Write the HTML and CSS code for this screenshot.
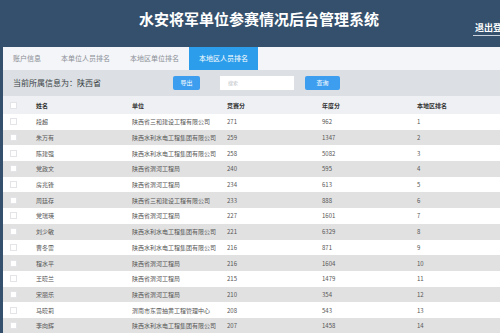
FILE: index.html
```html
<!DOCTYPE html>
<html lang="zh-CN">
<head>
  <meta charset="UTF-8">
  <meta name="viewport" content="width=device-width, initial-scale=1.0">
  <title>水安将军单位参赛情况后台管理系统</title>
  <link rel="stylesheet" href="styles.css">
</head>
<body>

<div class="Page">
  <div class="Header">
    <span></span>
    <h1>水安将军单位参赛情况后台管理系统</h1>
    <a class="Logout" href="#">退出登录</a>
  </div>

  <div class="Panel">
    <div class="Tabs">
      <span class="Tab">账户信息</span>
      <span class="Tab">本单位人员排名</span>
      <span class="Tab">本地区单位排名</span>
      <span class="Tab active">本地区人员排名</span>
    </div>

    <div class="InfoBar">
      <span class="InfoText">当前所属信息为：陕西省</span>
      <button class="Btn export">导出</button>
      <input class="Search" type="text" placeholder="搜索">
      <button class="Btn query">查询</button>
    </div>

    <div class="RankTable">
      <div class="Row head">
        <span class="Check"></span>
        <span>姓名</span>
        <span>单位</span>
        <span>竞赛分</span>
        <span>年度分</span>
        <span>本地区排名</span>
      </div>
      <div class="Row"><span class="Check"></span><span>段超</span><span>陕西省三和建设工程有限公司</span><span>271</span><span>962</span><span>1</span></div>
      <div class="Row"><span class="Check"></span><span>朱万有</span><span>陕西水利水电工程集团有限公司</span><span>259</span><span>1347</span><span>2</span></div>
      <div class="Row"><span class="Check"></span><span>陈建强</span><span>陕西水利水电工程集团有限公司</span><span>258</span><span>5082</span><span>3</span></div>
      <div class="Row"><span class="Check"></span><span>党政文</span><span>陕西省渭河工程局</span><span>240</span><span>595</span><span>4</span></div>
      <div class="Row"><span class="Check"></span><span>房兆锋</span><span>陕西省渭河工程局</span><span>234</span><span>613</span><span>5</span></div>
      <div class="Row"><span class="Check"></span><span>周廷存</span><span>陕西省三和建设工程有限公司</span><span>233</span><span>888</span><span>6</span></div>
      <div class="Row"><span class="Check"></span><span>党瑞瑛</span><span>陕西省渭河工程局</span><span>227</span><span>1601</span><span>7</span></div>
      <div class="Row"><span class="Check"></span><span>刘少敏</span><span>陕西水利水电工程集团有限公司</span><span>221</span><span>6329</span><span>8</span></div>
      <div class="Row"><span class="Check"></span><span>曹冬雷</span><span>陕西水利水电工程集团有限公司</span><span>216</span><span>871</span><span>9</span></div>
      <div class="Row"><span class="Check"></span><span>程水平</span><span>陕西省渭河工程局</span><span>216</span><span>1604</span><span>10</span></div>
      <div class="Row"><span class="Check"></span><span>王晓兰</span><span>陕西省渭河工程局</span><span>215</span><span>1479</span><span>11</span></div>
      <div class="Row"><span class="Check"></span><span>宋丽乐</span><span>陕西省渭河工程局</span><span>210</span><span>354</span><span>12</span></div>
      <div class="Row"><span class="Check"></span><span>马晓莉</span><span>渭南市东雷抽黄工程管理中心</span><span>208</span><span>543</span><span>13</span></div>
      <div class="Row"><span class="Check"></span><span>李向辉</span><span>陕西水利水电工程集团有限公司</span><span>207</span><span>1458</span><span>14</span></div>
    </div>
  </div>
</div>

</body>
</html>
```

FILE: styles.css
```css
body {
  font-family: "Noto Sans CJK SC", "Noto Sans", sans-serif;
  margin: 0;
  background-color: #34506c;
  overflow: hidden;
}

.Page {
  width: 518px;
}

.Header {
  height: 47px;
  display: grid;
  grid-template-columns: 1fr auto 1fr;
  color: #fff;
}

.Header h1 {
  margin: 9px 0 0;
  font-size: 15px;
  line-height: 20px;
  font-weight: bold;
}

.Logout {
  justify-self: end;
  align-self: start;
  margin-top: 22px;
  padding: 0 7px 1px 2px;
  font-size: 9px;
  line-height: 12px;
  font-weight: bold;
  color: #fff;
  text-decoration: none;
  border-bottom: 1px solid #c9d2dc;
}

.Panel {
  margin-left: 3px;
  background-color: #fff;
}

.Tabs {
  display: flex;
  height: 23px;
  background-color: #f4f5f8;
}

.Tab {
  padding: 0 10px;
  font-size: 7px;
  line-height: 23px;
  color: #8a8f96;
}

.Tab.active {
  background-color: #2c9dea;
  color: #fff;
}

.InfoBar {
  display: flex;
  align-items: center;
  height: 25px;
  padding-left: 10px;
  background-color: #dcdfe4;
}

.InfoText {
  width: 160px;
  font-size: 8px;
  color: #3a3f45;
}

.Btn {
  height: 14px;
  padding: 0;
  border: none;
  border-radius: 2px;
  background-color: #3d9ef0;
  color: #fff;
  font-family: inherit;
  font-size: 6px;
}

.Btn.export {
  width: 27px;
}

.Btn.query {
  width: 35px;
}

.Search {
  width: 74px;
  height: 14px;
  margin: 0 11px 0 20px;
  padding: 0 0 0 8px;
  box-sizing: border-box;
  border: none;
  background-color: #fff;
  font-family: inherit;
  font-size: 5px;
}

.Search::placeholder {
  color: #b8bcc2;
}

.RankTable {
  padding-top: 1px;
  background-color: #dcdfe4;
}

.Row {
  display: grid;
  grid-template-columns: 30px 96px 95px 95px 95px 1fr;
  align-items: center;
  height: 15.7px;
  font-size: 6px;
  color: #555;
  background-color: #fff;
}

.Row:nth-child(odd) {
  background-color: #e1e1e1;
}

.Row span {
  padding-left: 3px;
  white-space: nowrap;
}

.Row.head {
  height: 18px;
  background-color: #eef0f4;
  color: #333;
  font-weight: bold;
}

.Row .Check {
  width: 7px;
  height: 7px;
  padding: 0;
  margin-left: 7px;
  background-color: #fff;
  border: 1px solid #e2e4e8;
  box-sizing: border-box;
}
```
